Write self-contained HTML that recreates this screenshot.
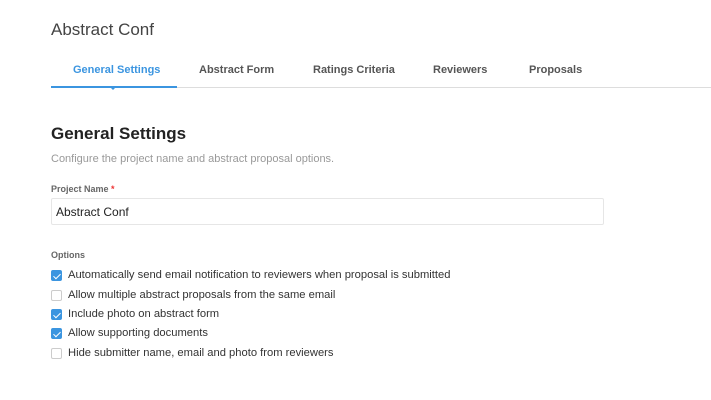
<!DOCTYPE html>
<html><head><style>
*{margin:0;padding:0;box-sizing:border-box}
body{width:711px;height:400px;background:#fff;font-family:"Liberation Sans",sans-serif;position:relative;overflow:hidden;color:#333}
.abs{position:absolute;white-space:nowrap}
.tab{position:absolute;top:64px;font-size:11px;font-weight:bold;color:#555}
.cb{position:absolute;left:51px;width:11px;height:11px;border-radius:2px;border:1px solid #ccc;background:#fff}
.cb.on{background:#3b95e0;border-color:#3b95e0}
.cb.on:after{content:"";position:absolute;left:3px;top:1px;width:3px;height:6px;border:solid #fff;border-width:0 1.5px 1.5px 0;transform:rotate(45deg)}
.lbl{position:absolute;left:68px;font-size:11.2px;color:#333;white-space:nowrap}
</style></head><body>
<div class="abs" style="left:51px;top:20px;font-size:17px;color:#444">Abstract Conf</div>
<div class="tab" style="left:73px;color:#3b95e0">General Settings</div>
<div class="tab" style="left:199px">Abstract Form</div>
<div class="tab" style="left:313px">Ratings Criteria</div>
<div class="tab" style="left:433px">Reviewers</div>
<div class="tab" style="left:529px">Proposals</div>
<div class="abs" style="left:177px;top:87px;width:534px;height:1px;background:#ddd"></div>
<div class="abs" style="left:51px;top:86px;width:126px;height:2px;background:#3b95e0"></div>
<div class="abs" style="left:111px;top:88px;width:0;height:0;border-left:2px solid transparent;border-right:2px solid transparent;border-top:2px solid #3b95e0"></div>
<div class="abs" style="left:51px;top:124px;font-size:17px;font-weight:bold;color:#222">General Settings</div>
<div class="abs" style="left:51px;top:153px;font-size:11px;color:#999">Configure the project name and abstract proposal options.</div>
<div class="abs" style="left:51px;top:184px;font-size:9px;font-weight:bold;color:#666">Project Name <span style="color:#e33">*</span></div>
<div class="abs" style="left:51px;top:198px;width:553px;height:27px;border:1px solid #e6e6e6;border-radius:2px"></div>
<div class="abs" style="left:56px;top:205px;font-size:12px;color:#222">Abstract Conf</div>
<div class="abs" style="left:51px;top:250px;font-size:9px;font-weight:bold;color:#666">Options</div>
<div class="cb on" style="top:270px"></div><div class="lbl" style="top:269px">Automatically send email notification to reviewers when proposal is submitted</div>
<div class="cb" style="top:290px"></div><div class="lbl" style="top:289px">Allow multiple abstract proposals from the same email</div>
<div class="cb on" style="top:309px"></div><div class="lbl" style="top:308px">Include photo on abstract form</div>
<div class="cb on" style="top:328px"></div><div class="lbl" style="top:327px">Allow supporting documents</div>
<div class="cb" style="top:348px"></div><div class="lbl" style="top:347px">Hide submitter name, email and photo from reviewers</div>
</body></html>
